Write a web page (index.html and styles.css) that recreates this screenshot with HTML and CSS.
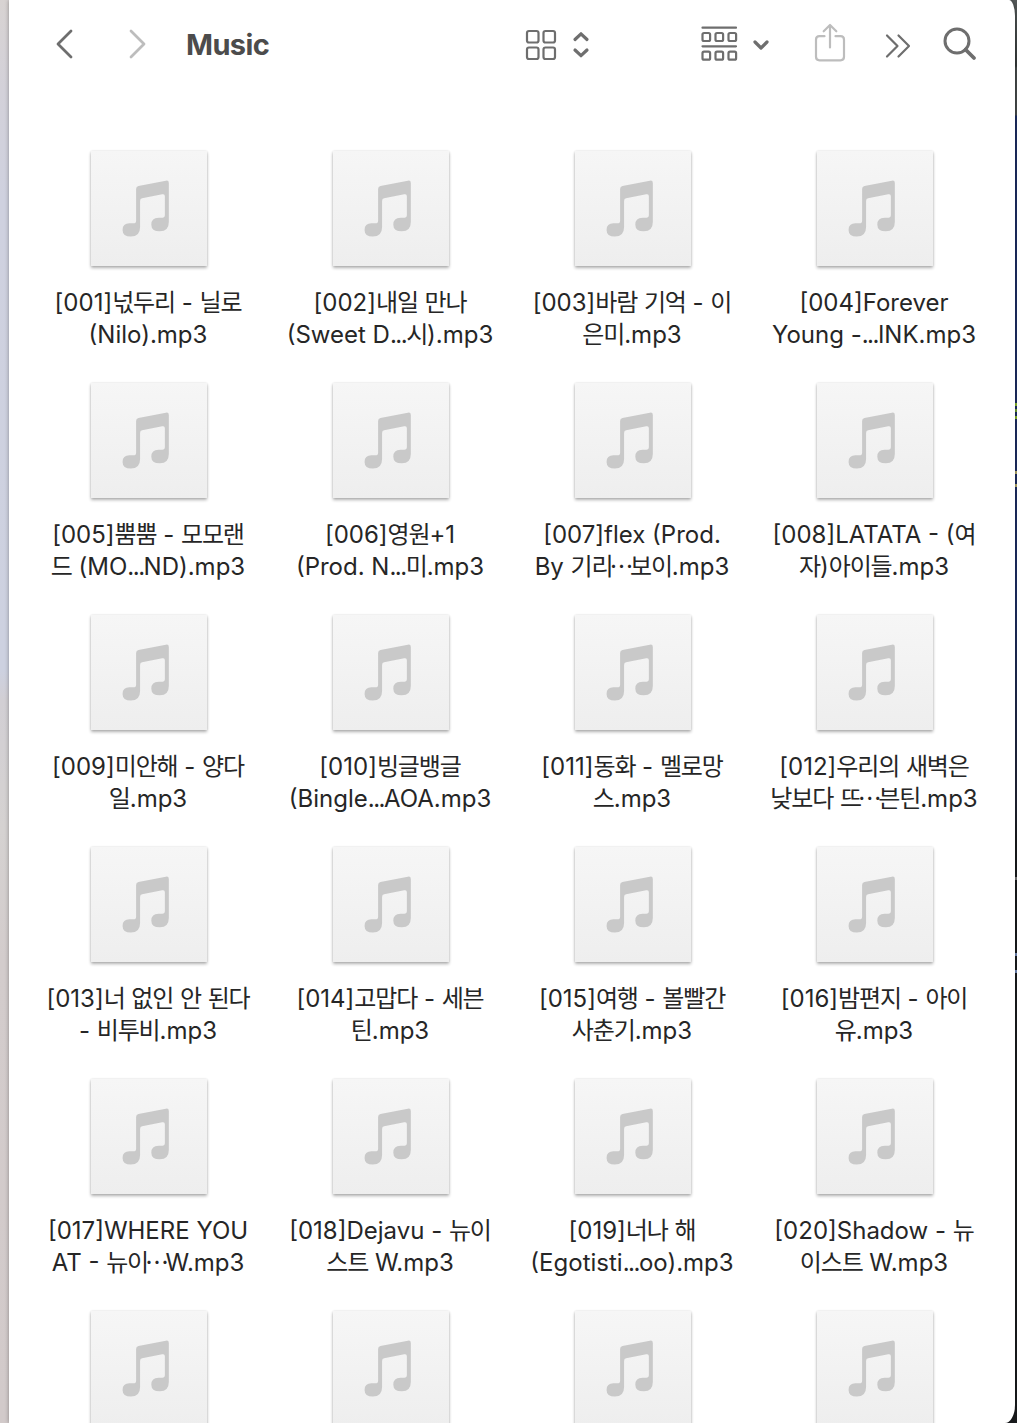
FILE: index.html
```
<!DOCTYPE html>
<html lang="ko">
<head>
    <meta charset="UTF-8">
    <meta name="viewport" content="width=device-width, initial-scale=1.0">
    <title>Music</title>
    <link rel="stylesheet" href="styles.css">
</head>
<body>
    <div class="window">
        <!-- Toolbar -->
        <header class="toolbar">
            <svg class="back" width="20" height="32" viewBox="0 0 20 32"><path d="M16 3 L3 16 L16 29"/></svg>
            <svg class="forward" width="20" height="32" viewBox="0 0 20 32"><path d="M3 3 L16 16 L3 29"/></svg>
            <h1>Music</h1>
            <svg class="view" width="70" height="40" viewBox="0 0 70 40">
                <rect x="3" y="7" width="11.500" height="11.500" rx="2"/>
                <rect x="19.500" y="7" width="11.500" height="11.500" rx="2"/>
                <rect x="3" y="23.500" width="11.500" height="11.500" rx="2"/>
                <rect x="19.500" y="23.500" width="11.500" height="11.500" rx="2"/>
                <path class="bold" d="M51 15.500 L57 9.800 L63 15.500 M51 26 L57 31.700 L63 26"/>
            </svg>
            <svg class="group" width="72" height="40" viewBox="0 0 72 40">
                <path d="M2.500 3.700 H36 M2.500 22.300 H36"/>
                <rect x="2.500" y="9" width="7.600" height="8" rx="1.500"/>
                <rect x="15.500" y="9" width="7.600" height="8" rx="1.500"/>
                <rect x="28.500" y="9" width="7.600" height="8" rx="1.500"/>
                <rect x="2.500" y="27.700" width="7.600" height="8" rx="1.500"/>
                <rect x="15.500" y="27.700" width="7.600" height="8" rx="1.500"/>
                <rect x="28.500" y="27.700" width="7.600" height="8" rx="1.500"/>
                <path class="bold" d="M55 18 L61 24 L67 18"/>
            </svg>
            <svg class="share" width="34" height="42" viewBox="0 0 34 42">
                <path d="M11.500 13.200 H6.500 Q3 13.200 3 16.700 V33.800 Q3 37.300 6.500 37.300 H27.500 Q31 37.300 31 33.800 V16.700 Q31 13.200 27.500 13.200 H22.500 M17 24.500 V2.500 M10.700 8.300 L17 2 L23.300 8.300"/>
            </svg>
            <svg class="more" width="28" height="28" viewBox="0 0 28 28"><path d="M2 4.500 L12.500 15 L2 25.500 M13.500 4.500 L24 15 L13.500 25.500"/></svg>
            <svg class="search" width="36" height="36" viewBox="0 0 36 36"><circle cx="15" cy="15" r="12"/><path d="M23.500 23.500 L32 32"/></svg>
        </header>

        <!-- Files -->
        <main class="files" id="files"></main>
    </div>

    <!-- Desktop visible on the right of the window -->
    <div class="edge">
        <i class="green"></i><i class="yellow"></i><i class="blue"></i>
    </div>

    <script>
        const files = [
            ['[001]넋두리 - 닐로', '(Nilo).mp3'],
            ['[002]내일 만나', '(Sweet D...시).mp3'],
            ['[003]바람 기억 - 이', '은미.mp3'],
            ['[004]Forever', 'Young -...INK.mp3'],
            ['[005]뿜뿜 - 모모랜', '드 (MO...ND).mp3'],
            ['[006]영원+1', '(Prod. N...미.mp3'],
            ['[007]flex (Prod.', 'By 기리⋯보이.mp3'],
            ['[008]LATATA - (여', '자)아이들.mp3'],
            ['[009]미안해 - 양다', '일.mp3'],
            ['[010]빙글뱅글', '(Bingle...AOA.mp3'],
            ['[011]동화 - 멜로망', '스.mp3'],
            ['[012]우리의 새벽은', '낮보다 뜨⋯븐틴.mp3'],
            ['[013]너 없인 안 된다', '- 비투비.mp3'],
            ['[014]고맙다 - 세븐', '틴.mp3'],
            ['[015]여행 - 볼빨간', '사춘기.mp3'],
            ['[016]밤편지 - 아이', '유.mp3'],
            ['[017]WHERE YOU', 'AT - 뉴이⋯W.mp3'],
            ['[018]Dejavu - 뉴이', '스트 W.mp3'],
            ['[019]너나 해', '(Egotisti...oo).mp3'],
            ['[020]Shadow - 뉴', '이스트 W.mp3'],
            [], [], [], []
        ];

        const note = `
            <svg class="thumb" viewBox="62 60 350 348">
                <path d="M198 175 Q198 168 205 166 L288 150 Q297 148 297 157 V275 Q297 303 270 303 Q244 303 244 283 Q244 262 266 262 H277 Q285 262 285 254 V197 Q285 189 277 191 L216 203 Q210 204 210 211 V290 Q210 319 182 319 Q157 319 157 299 Q157 279 178 279 H190 Q198 279 198 271 Z"/>
            </svg>`;

        // Hangul runs and ellipses get their own tracking
        function markRuns(text) {
            return text
                .replace(/[가-힣]+/g, '<span class="ko">$&</span>')
                .replace(/⋯/g, '<span class="ko mid-dots">$&</span>')
                .replace(/\.\.\./g, '<span class="dots">$&</span>');
        }

        document.getElementById('files').innerHTML = files.map(lines => `
            <div class="file">
                ${note}
                <div class="name">${lines.map(line => `<div>${markRuns(line)}</div>`).join('')}</div>
            </div>`).join('');
    </script>
</body>
</html>
```
FILE: styles.css
```
body {
    margin: 0;
    width: 1017px;
    height: 1423px;
    overflow: hidden;
    position: relative;
    font-family: Inter, "Noto Sans CJK KR", sans-serif;
    background: linear-gradient(#d8d3d2 0, #d3d1d9 90px, #cfd1df 200px, #cdd1e0 670px, #d2cfd4 700px, #d5d2d1 830px, #d3cccc 960px, #d2caca 1423px);
}
.window {
    position: relative;
    z-index: 1;
    box-sizing: border-box;
    width: 1006px;
    height: 1423px;
    margin-left: 9px;
    overflow: hidden;
    background: #fff;
    border-radius: 0 6px 10px 0 / 0 16px 18px 0;
    box-shadow: 0 0 4px rgba(0, 0, 0, 0.35);
}
.edge {
    position: absolute;
    top: 0;
    right: 0;
    z-index: 0;
    width: 12px;
    height: 1423px;
    background: linear-gradient(#555a5a 0, #343838 66px, #454a4a 68px, #454a4a 115px, #1c2d62 116px, #1c2d62 600px, #202434 800px, #191b1d 840px, #191b1d 1423px);
}
.edge i {
    position: absolute;
    right: 0;
    width: 2px;
    height: 3px;
}
.edge .green {
    top: 403px;
    background: #89b72b;
    box-shadow: 0 6px #6f9d30, 0 13px #89b72b;
}
.edge .yellow {
    top: 471px;
    background: #b3a968;
    box-shadow: 0 13px #b3a968;
}
.edge .blue {
    top: 953px;
    background: #6f86b5;
    box-shadow: 0 17px #6f86b5, 0 -76px #777;
}
.toolbar {
    display: flex;
    align-items: flex-start;
    height: 151px;
}
.toolbar svg {
    flex: none;
    fill: none;
    stroke: #6e6e6e;
    stroke-width: 2.2;
    stroke-linecap: round;
    stroke-linejoin: round;
}
.toolbar .bold {
    stroke-width: 3.2;
}
.toolbar h1 {
    width: 338px;
    margin: 27px 0 0 38px;
    font-size: 29px;
    line-height: 36px;
    font-weight: 650;
    letter-spacing: -0.6px;
    color: #4c4c4c;
}
.toolbar .back {
    margin: 28px 0 0 45.5px;
    stroke-width: 2.8;
}
.toolbar .forward {
    margin: 28px 0 0 53.5px;
    stroke: #bdbdbd;
    stroke-width: 2.8;
}
.toolbar .view {
    margin-top: 24px;
}
.toolbar .group {
    margin: 24px 0 0 105.5px;
}
.toolbar .share {
    margin: 23px 0 0 41px;
    stroke: #bdbdbd;
}
.toolbar .more {
    margin: 31px 0 0 38px;
}
.toolbar .search {
    margin: 26px 0 0 29.5px;
    stroke-width: 3;
}
.toolbar .search path {
    stroke-width: 3.8;
}
.files {
    display: grid;
    grid-template-columns: repeat(4, 242px);
    grid-auto-rows: 232px;
    margin-left: 18px;
}
.file {
    display: flex;
    flex-direction: column;
    align-items: center;
}
.thumb {
    flex: none;
    width: 116px;
    height: 115px;
    margin-left: 2px;
    background: linear-gradient(#f6f6f6, #eeeeee);
    box-shadow: 0 2px 3px rgba(0, 0, 0, 0.3), 0 0 2px rgba(0, 0, 0, 0.12);
}
.thumb path {
    fill: #c9c9c9;
}
.name {
    margin-top: 21px;
    font-size: 24px;
    line-height: 32px;
    color: #262626;
    text-align: center;
    white-space: nowrap;
}
.name div {
    height: 32px;
}
.ko {
    font-family: "Noto Sans CJK KR", sans-serif;
    letter-spacing: -1.15px;
    line-height: 1;
}
.mid-dots {
    margin-left: -3px;
    letter-spacing: -3.5px;
}
.dots {
    letter-spacing: -1.5px;
}
```
